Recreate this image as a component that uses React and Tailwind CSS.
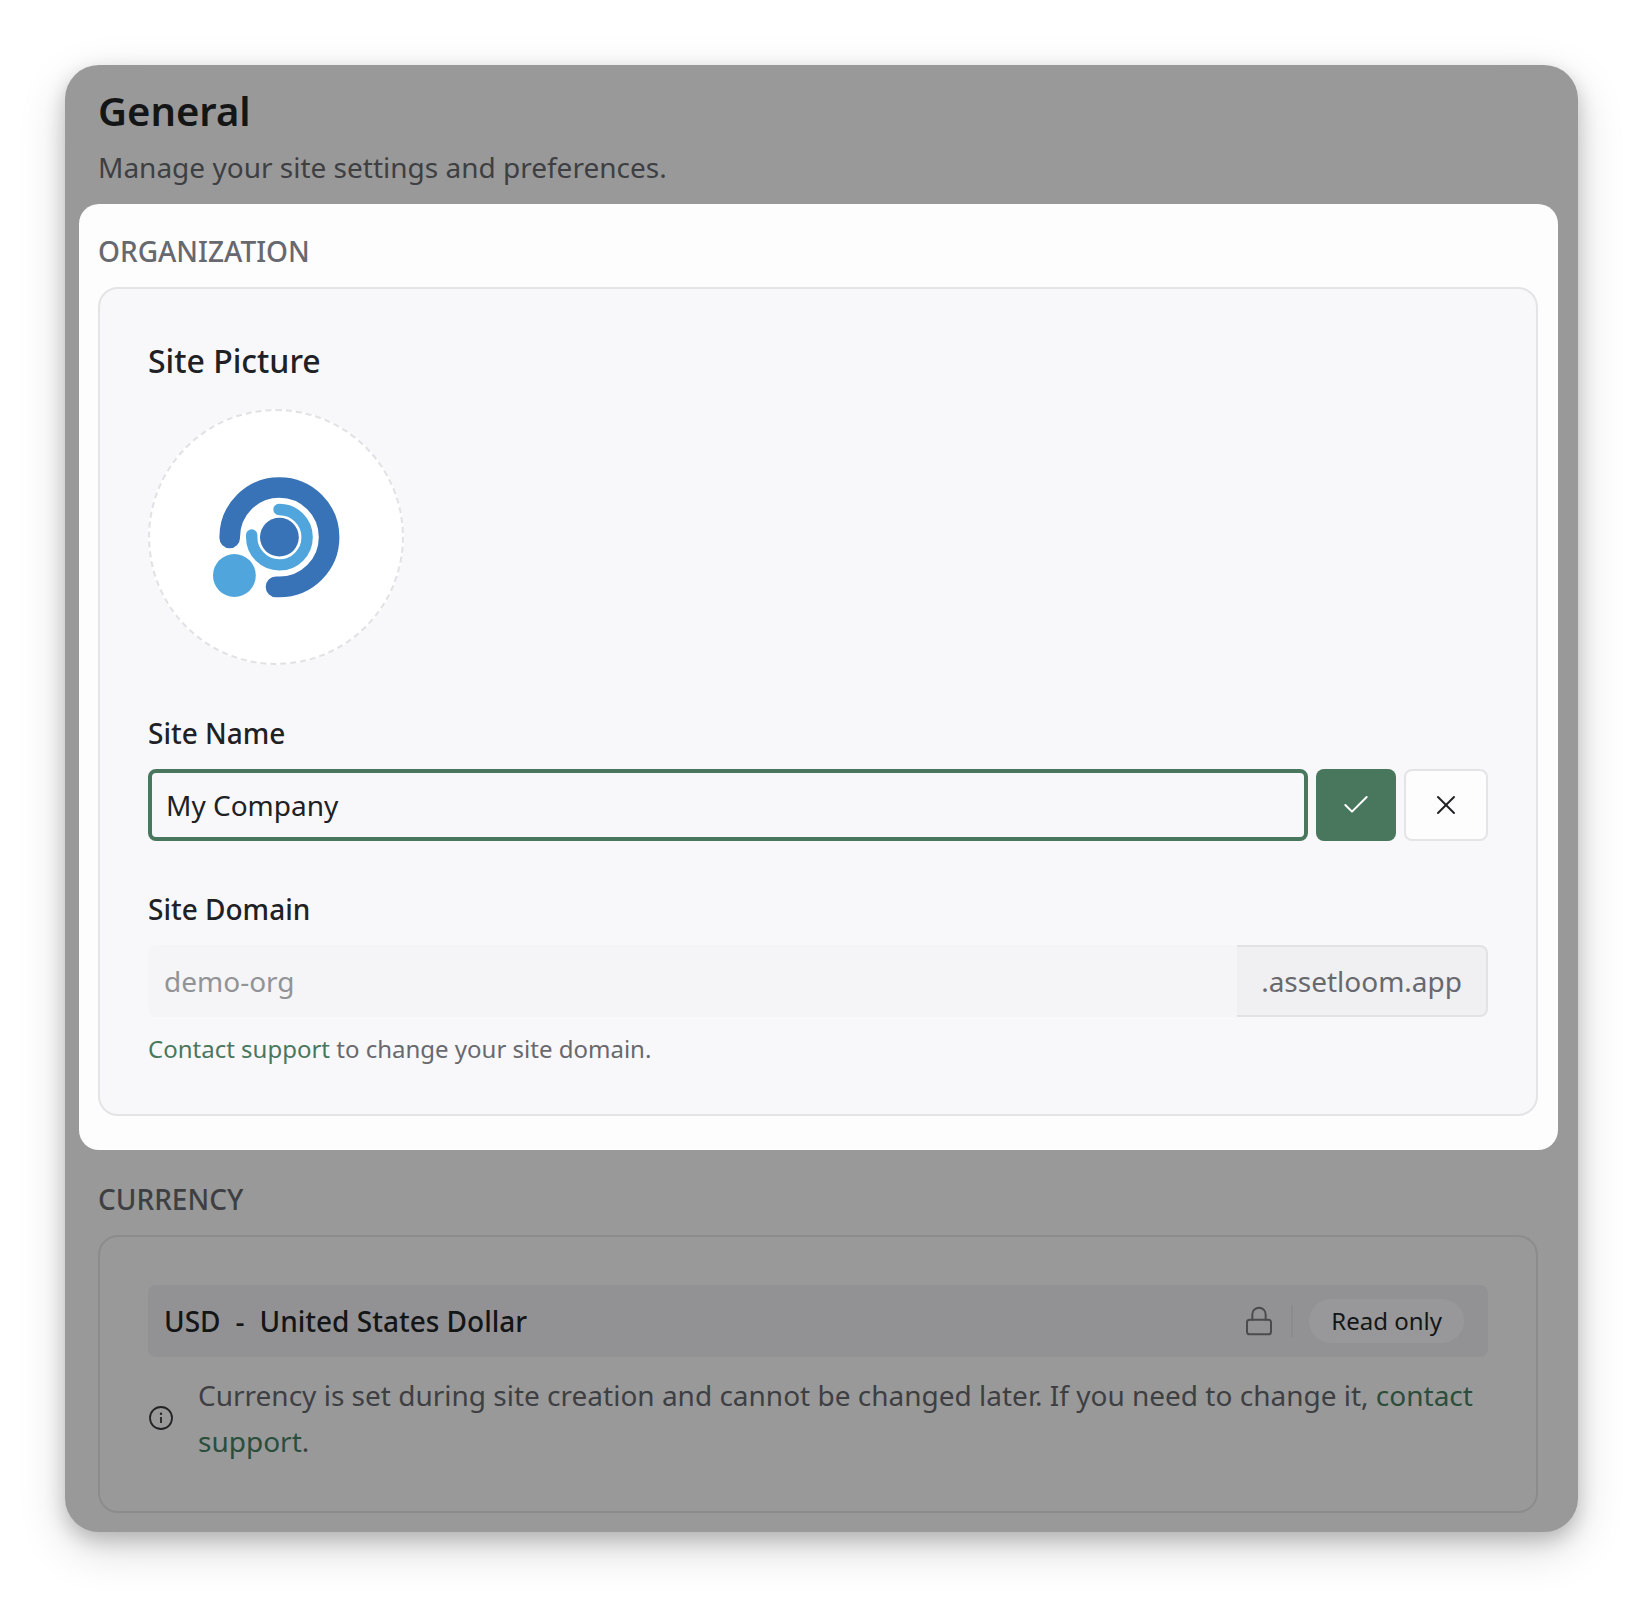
import { Check, Lock, X } from "lucide-react";

function SiteLogo() {
  return (
    <svg viewBox="0 0 128 128" className="size-32" fill="none" role="img" aria-label="Site logo">
      <path
        d="M17.7 65 V64.2 A49.7 49.7 0 1 1 67.4 113.9 H64"
        stroke="#3873b8"
        strokeWidth="20.6"
        strokeLinecap="round"
      />
      <path
        d="M67 36.5 A27.7 27.7 0 1 1 39.7 64.2 V62"
        stroke="#50a6dc"
        strokeWidth="11.4"
        strokeLinecap="round"
      />
      <circle cx="67.4" cy="64.2" r="19.4" fill="#3873b8" />
      <circle cx="22.4" cy="102.5" r="21.4" fill="#50a6dc" />
    </svg>
  );
}

function InfoIcon() {
  return (
    <svg viewBox="0 0 26 26" className="size-[26px] shrink-0" fill="none" aria-hidden="true">
      <circle cx="13" cy="13" r="11" stroke="#222325" strokeWidth="1.8" />
      <path d="M13 12 V18" stroke="#222325" strokeWidth="1.8" />
      <circle cx="13" cy="8.8" r="1.2" fill="#222325" />
    </svg>
  );
}

export default function App() {
  return (
    <div className="bg-white p-[65px] font-['Noto_Sans',sans-serif] text-[28px] leading-[42px]">
      <main className="rounded-[34px] bg-[#999999] pt-[21px] pb-[19px] shadow-[0_16px_48px_rgba(0,0,0,0.16),0_8px_20px_rgba(0,0,0,0.2)]">
        <header className="px-[33px]">
          <h1 className="text-[40px] leading-[50px] font-semibold text-[#141516]">General</h1>
          <p className="mt-2.5 text-[#3e3f42]">Manage your site settings and preferences.</p>
        </header>

        <section className="mt-4 mr-5 ml-3.5 rounded-[20px] bg-[#fdfdfe] pt-[26px] pr-5 pb-[34px] pl-[19px]">
          <h2 className="font-medium text-[#68696e]">ORGANIZATION</h2>

          <div className="mt-[15px] rounded-[20px] border-2 border-[#e4e4e7] bg-[#f8f8fa] px-12 pt-12 pb-[47px]">
            <h3 className="text-[32px] leading-[48px] font-medium text-[#202124]">Site Picture</h3>
            <div className="mt-6 flex size-64 items-center justify-center rounded-full border-2 border-dashed border-[#e2e2e6] bg-white">
              <SiteLogo />
            </div>

            <label htmlFor="site-name" className="mt-[47px] block font-medium text-[#202124]">
              Site Name
            </label>
            <div className="mt-[15px] flex gap-2">
              <input
                id="site-name"
                type="text"
                defaultValue="My Company"
                className="h-18 min-w-0 flex-1 rounded-lg border-4 border-[#49775e] bg-[#f8f8fa] px-3.5 text-[#202124] outline-none"
              />
              <button
                type="button"
                aria-label="Save"
                className="flex h-18 w-20 items-center justify-center rounded-lg bg-[#49775e] text-white"
              >
                <Check className="size-8" strokeWidth={1.5} />
              </button>
              <button
                type="button"
                aria-label="Cancel"
                className="flex h-18 w-21 items-center justify-center rounded-lg border-2 border-[#e4e4e7] bg-[#fdfdfe] text-[#202124]"
              >
                <X className="size-8" strokeWidth={1.5} />
              </button>
            </div>

            <label htmlFor="site-domain" className="mt-[47px] block font-medium text-[#202124]">
              Site Domain
            </label>
            <div className="mt-[15px] flex">
              <input
                id="site-domain"
                type="text"
                defaultValue="demo-org"
                disabled
                className="h-18 min-w-0 flex-1 rounded-l-lg bg-[#f5f5f7] px-4 text-[#929396]"
              />
              <span className="flex h-18 items-center rounded-r-lg border-2 border-l-0 border-[#e2e2e5] bg-[#f0f0f2] px-6 text-[#68696e]">
                .assetloom.app
              </span>
            </div>
            <p className="mt-3.5 text-2xl leading-9 text-[#68696e]">
              <a href="#support" className="text-[#49775e]">Contact support</a> to change your site domain.
            </p>
          </div>
        </section>

        <section className="mt-7 pr-10 pl-[33px]">
          <h2 className="font-medium text-[#3e3f42]">CURRENCY</h2>

          <div className="mt-[15px] rounded-[20px] border-2 border-[#8c8c8d] px-12 pt-12 pb-[47px]">
            <div className="flex h-18 items-center justify-between rounded-lg bg-[#929294] pr-6 pl-4">
              <div className="flex gap-[15px] font-medium text-[#141516]">
                <span>USD</span>
                <span>-</span>
                <span>United States Dollar</span>
              </div>
              <div className="flex items-center">
                <Lock className="size-8 text-[#4b4b4e]" strokeWidth={1.5} />
                <span className="ml-4 h-8 w-0.5 bg-[#8b8b8d]" />
                <span className="ml-4 rounded-full bg-[#98989a] px-[22px] py-1 text-2xl leading-9 text-[#141516]">
                  Read only
                </span>
              </div>
            </div>
            <div className="mt-[15px] flex items-center gap-6">
              <InfoIcon />
              <p className="leading-[46px] text-[#3e3f42]">
                Currency is set during site creation and cannot be changed later. If you need to change it,{" "}
                <a href="#support" className="text-[#2b4e3c]">contact support</a>.
              </p>
            </div>
          </div>
        </section>
      </main>
    </div>
  );
}
